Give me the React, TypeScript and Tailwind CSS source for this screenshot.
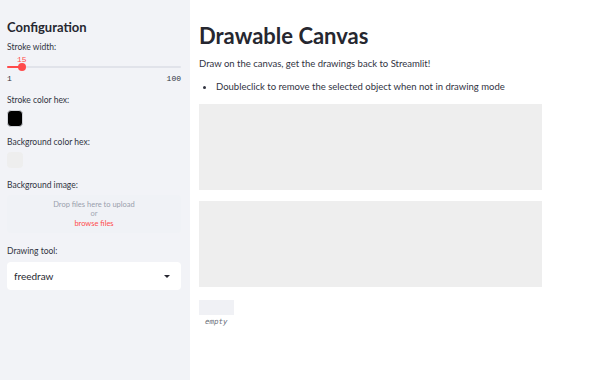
import React from 'react';

const sans = { fontFamily: '"Lato", "Noto Sans", sans-serif' };

function Label({ children }: { children: React.ReactNode }) {
    return <p className="text-[8.5px] leading-[12px] text-[#31333f]">{children}</p>;
}

export default function App() {
    return (
        <div className="flex w-[600px] h-[380px] bg-white font-['Lato','Noto_Sans',sans-serif] text-[#31333f] overflow-hidden">
            {/* Sidebar */}
            <aside className="w-[190px] shrink-0 bg-[#f2f3f7] pl-[7px] pr-[9px] pt-[18px]">
                <h2 className="text-[13px] font-bold leading-[18px] text-[#262730]">Configuration</h2>

                <div className="mt-[5px]">
                    <Label>Stroke width:</Label>
                    <div className="relative h-[20px]">
                        <span className="absolute left-[10px] top-[1px] text-[8px] font-['Liberation_Mono',monospace] text-[#ff4b4b]">15</span>
                        <div className="absolute left-0 right-0 top-[13px] h-[2px] rounded bg-[#e1e3ea]" />
                        <div className="absolute left-0 w-[15px] top-[13px] h-[2px] rounded bg-[#ff4b4b]" />
                        <div className="absolute left-[11px] top-[10px] w-[8px] h-[8px] rounded-full bg-[#ff4b4b]" />
                    </div>
                    <div className="flex justify-between text-[8px] font-['Liberation_Mono',monospace] text-[#31333f] leading-[12px]">
                        <span>1</span>
                        <span>100</span>
                    </div>
                </div>

                <div className="mt-[9px]">
                    <Label>Stroke color hex:</Label>
                    <div className="mt-[4px] w-[16px] h-[17px] rounded-[4px] bg-black border border-[#d0d2d8]" />
                </div>

                <div className="mt-[9px]">
                    <Label>Background color hex:</Label>
                    <div className="mt-[4px] w-[16px] h-[16px] rounded-[4px] bg-[#eeeeee]" />
                </div>

                <div className="mt-[11px]">
                    <Label>Background image:</Label>
                    <div className="mt-[4px] h-[38px] rounded bg-[#f0f2f6] flex flex-col items-center justify-center text-[7.5px] leading-[9px]">
                        <span className="text-[#9aa0ac]">Drop files here to upload</span>
                        <span className="text-[#a3a8b4]">or</span>
                        <span className="text-[#ff4b4b] mt-[1px]">browse files</span>
                    </div>
                </div>

                <div className="mt-[12px]">
                    <Label>Drawing tool:</Label>
                    <div className="mt-[5px] h-[28px] bg-white rounded flex items-center justify-between pl-[7px] pr-[11px]">
                        <span className="text-[10px] text-[#262730]">freedraw</span>
                        <span className="w-0 h-0 border-l-[3px] border-r-[3px] border-t-[3px] border-l-transparent border-r-transparent border-t-[#262730]" />
                    </div>
                </div>
            </aside>

            {/* Main */}
            <main className="flex-1 pl-[9px] pt-[21px]" style={sans}>
                <h1 className="text-[22px] font-bold leading-[30px] text-[#262730]">Drawable Canvas</h1>
                <p className="mt-[6px] text-[9.5px] leading-[14px]">Draw on the canvas, get the drawings back to Streamlit!</p>
                <ul className="mt-[9px] text-[9.5px] leading-[14px]">
                    <li className="flex items-center gap-[10px] pl-[4px]">
                        <span className="w-[3px] h-[3px] rounded-full bg-[#31333f]" />
                        Doubleclick to remove the selected object when not in drawing mode
                    </li>
                </ul>
                <div className="mt-[10px] w-[343px] h-[86px] bg-[#eeeeee]" />
                <div className="mt-[11px] w-[343px] h-[86px] bg-[#eeeeee]" />
                <div className="mt-[13px] w-[35px] h-[15px] bg-[#f0f1f5]" />
                <p className="mt-[1px] pl-[6px] text-[7.5px] italic font-['DejaVu_Sans_Mono',monospace] text-[#6b6f7b]">empty</p>
            </main>
        </div>
    );
}
